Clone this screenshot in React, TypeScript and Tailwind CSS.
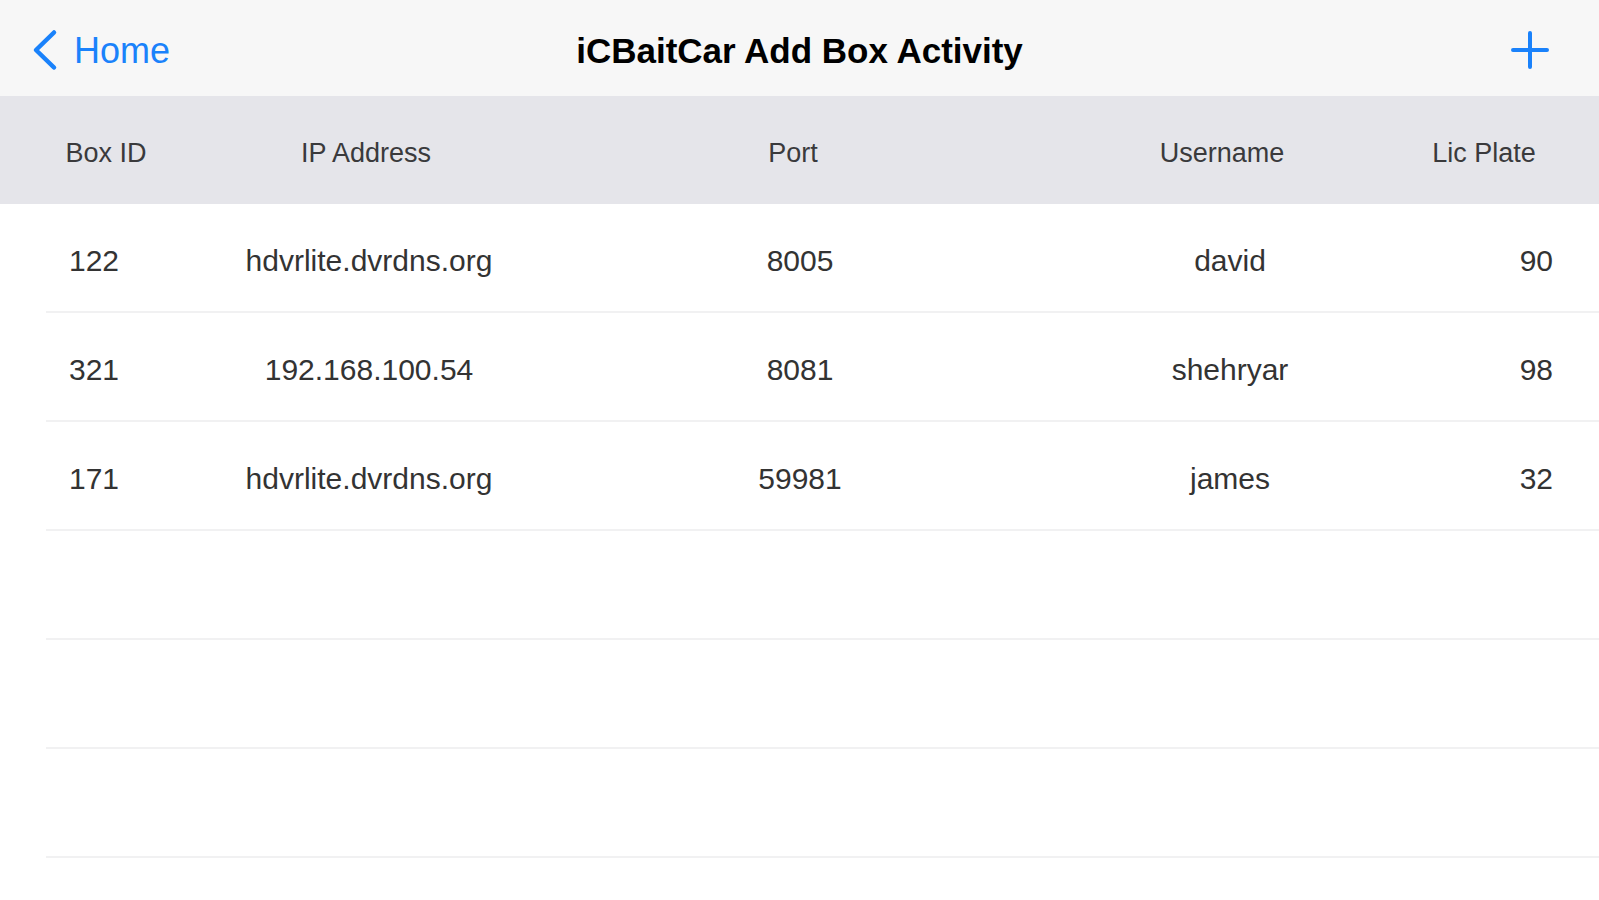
import React from "react";

type Box = {
  id: string;
  ip: string;
  port: string;
  username: string;
  plate: string;
};

const BOXES: Box[] = [
  { id: "122", ip: "hdvrlite.dvrdns.org", port: "8005", username: "david", plate: "90" },
  { id: "321", ip: "192.168.100.54", port: "8081", username: "shehryar", plate: "98" },
  { id: "171", ip: "hdvrlite.dvrdns.org", port: "59981", username: "james", plate: "32" },
];

// empty rows keep the table lines going down the screen
const EMPTY_ROWS = 3;

function ChevronLeft() {
  return (
    <svg width="28" height="42" viewBox="0 0 28 42" fill="none" aria-hidden="true">
      <path
        d="M24 3.5 L6 21 L24 38.5"
        stroke="#1a82fb"
        strokeWidth="4.5"
        strokeLinecap="round"
        strokeLinejoin="round"
      />
    </svg>
  );
}

function PlusIcon() {
  return (
    <svg width="38" height="38" viewBox="0 0 38 38" fill="none" aria-hidden="true">
      <path d="M19 2 V36 M2 19 H36" stroke="#1a82fb" strokeWidth="4" strokeLinecap="round" />
    </svg>
  );
}

function NavBar() {
  return (
    <header className="grid h-[96px] grid-cols-[1fr_auto_1fr] items-center bg-[#f7f7f7]">
      <button
        type="button"
        className="flex items-center gap-[16px] pl-[30px] pt-[4px] text-[36px] leading-none text-[#1a82fb]"
      >
        <ChevronLeft />
        <span className="pt-[2px]">Home</span>
      </button>
      <h1 className="pt-[4px] text-[35px] font-bold leading-none text-black">iCBaitCar Add Box Activity</h1>
      <div className="flex justify-end pr-[50px] pt-[4px]">
        <button type="button" aria-label="Add box">
          <PlusIcon />
        </button>
      </div>
    </header>
  );
}

function TableHeader() {
  return (
    <div className="grid h-[108px] grid-cols-[212px_308px_546px_312px_212px] items-center bg-[#e5e5ea] pt-[6px] text-center text-[27px] text-[#3a3a3c]">
      <span>Box ID</span>
      <span>IP Address</span>
      <span>Port</span>
      <span>Username</span>
      <span>Lic Plate</span>
    </div>
  );
}

function Row({ box }: { box?: Box }) {
  return (
    <div className="flex h-[109px] flex-col">
      <div className="grid flex-1 grid-cols-[188px_362px_500px_360px_1fr] items-center pt-[5px] text-center text-[30px] text-[#333333]">
        <span>{box?.id}</span>
        <span>{box?.ip}</span>
        <span>{box?.port}</span>
        <span>{box?.username}</span>
        <span className="pr-[46px] text-right">{box?.plate}</span>
      </div>
      <div className="ml-[46px] h-[2px] bg-[#f1f1f2]" />
    </div>
  );
}

export default function App() {
  return (
    <div className="min-h-screen w-full bg-white font-['Liberation_Sans',Arial,sans-serif]">
      <NavBar />
      <TableHeader />
      <div className="flex flex-col">
        {BOXES.map((box) => (
          <Row key={box.id} box={box} />
        ))}
        {Array.from({ length: EMPTY_ROWS }).map((_, i) => (
          <Row key={`empty-${i}`} />
        ))}
      </div>
    </div>
  );
}
